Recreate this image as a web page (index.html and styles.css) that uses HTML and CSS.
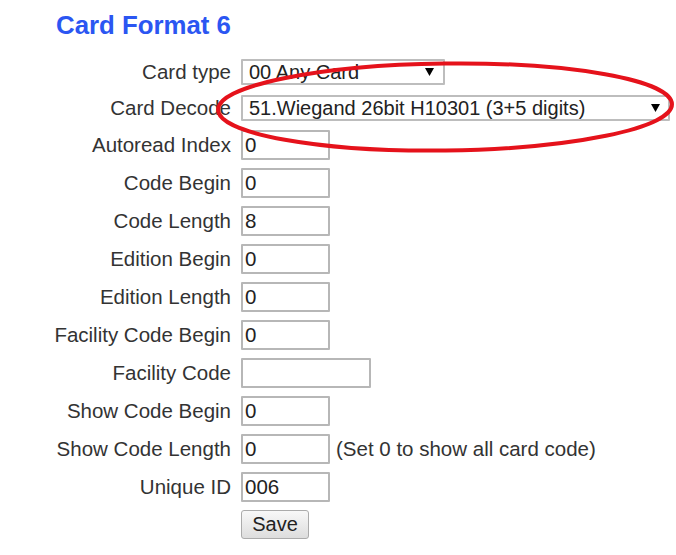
FILE: index.html
```html
<!DOCTYPE html>
<html lang="en">
<head>
<meta charset="UTF-8">
<meta name="viewport" content="width=device-width, initial-scale=1.0">
<title>Card Format 6</title>
<link rel="stylesheet" href="styles.css">
</head>
<body>

<div class="page">
  <h2 class="title">Card Format 6</h2>

  <form class="card-form" onsubmit="return false">
    <label class="field-label" for="cardType">Card type</label>
    <div class="field">
      <div class="select-wrap narrow">
        <select id="cardType">
          <option>00 Any Card</option>
        </select>
        <svg class="arrow" width="9" height="8" viewBox="0 0 9 8"><path d="M0 0H9L4.5 8Z" fill="#000"/></svg>
      </div>
    </div>

    <label class="field-label" for="cardDecode">Card Decode</label>
    <div class="field">
      <div class="select-wrap wide">
        <select id="cardDecode">
          <option>51.Wiegand 26bit H10301 (3+5 digits)</option>
        </select>
        <svg class="arrow" width="9" height="8" viewBox="0 0 9 8"><path d="M0 0H9L4.5 8Z" fill="#000"/></svg>
      </div>
    </div>

    <label class="field-label" for="autoread">Autoread Index</label>
    <div class="field"><input id="autoread" type="text" value="0"></div>

    <label class="field-label" for="codeBegin">Code Begin</label>
    <div class="field"><input id="codeBegin" type="text" value="0"></div>

    <label class="field-label" for="codeLength">Code Length</label>
    <div class="field"><input id="codeLength" type="text" value="8"></div>

    <label class="field-label" for="editionBegin">Edition Begin</label>
    <div class="field"><input id="editionBegin" type="text" value="0"></div>

    <label class="field-label" for="editionLength">Edition Length</label>
    <div class="field"><input id="editionLength" type="text" value="0"></div>

    <label class="field-label" for="facilityBegin">Facility Code Begin</label>
    <div class="field"><input id="facilityBegin" type="text" value="0"></div>

    <label class="field-label" for="facilityCode">Facility Code</label>
    <div class="field"><input id="facilityCode" class="long" type="text" value=""></div>

    <label class="field-label" for="showBegin">Show Code Begin</label>
    <div class="field"><input id="showBegin" type="text" value="0"></div>

    <label class="field-label" for="showLength">Show Code Length</label>
    <div class="field">
      <input id="showLength" type="text" value="0">
      <span class="hint">(Set 0 to show all card code)</span>
    </div>

    <label class="field-label" for="uniqueId">Unique ID</label>
    <div class="field"><input id="uniqueId" type="text" value="006"></div>

    <span></span>
    <div class="field"><button type="submit" class="save-btn">Save</button></div>
  </form>

  <!-- red marker ring drawn over the decode row -->
  <svg class="marker" width="676" height="555" viewBox="0 0 676 555">
    <ellipse cx="445" cy="107" rx="227" ry="43.5" transform="rotate(-0.7 445 107)"
             fill="none" stroke="#e5121b" stroke-width="4"/>
  </svg>
</div>

</body>
</html>
```

FILE: styles.css
```css
body {
  margin: 0;
  background: #fff;
  font-family: 'Liberation Sans', Arial, sans-serif;
  color: #333;
}
.page {
  position: relative;
  width: 676px;
  height: 555px;
  overflow: hidden;
}
.title {
  margin: 10px 0 0 56px;
  font-size: 25.8px;
  line-height: 30px;
  font-weight: bold;
  color: #2b56f2;
}
.card-form {
  margin-top: 18px;
  display: grid;
  grid-template-columns: 231px auto;
  column-gap: 10px;
  row-gap: 8px;
  align-items: center;
}
.field-label {
  text-align: right;
  font-size: 20.5px;
  line-height: 24px;
  color: #333;
  white-space: nowrap;
}
.field {
  display: flex;
  align-items: center;
  gap: 6px;
}
input[type="text"] {
  box-sizing: border-box;
  width: 89px;
  height: 30px;
  margin: 0;
  padding: 0 2px;
  border: 2px solid #b7b7b7;
  border-radius: 1px;
  font-family: inherit;
  font-size: 20.5px;
  color: #222;
  background: #fff;
  outline: none;
}
input.long {
  width: 130px;
}
.hint {
  font-size: 20.5px;
  color: #333;
  white-space: nowrap;
}
.select-wrap {
  position: relative;
  margin: 1px 0;
}
.select-wrap select {
  box-sizing: border-box;
  width: 100%;
  height: 26px;
  margin: 0;
  padding: 0 24px 0 6px;
  border: 2px solid #bdbdbd;
  border-radius: 1px;
  background: #fff;
  font-family: inherit;
  font-size: 20px;
  color: #222;
  appearance: none;
  -webkit-appearance: none;
  outline: none;
}
.select-wrap.narrow {
  width: 204px;
}
.select-wrap.wide {
  width: 429px;
}
.arrow {
  position: absolute;
  right: 11px;
  top: 9px;
  pointer-events: none;
}
.wide .arrow {
  right: 10px;
}
.save-btn {
  box-sizing: border-box;
  width: 68px;
  height: 29px;
  margin: 0;
  padding: 0;
  border: 1px solid #ababab;
  border-radius: 3px;
  background: linear-gradient(to bottom, #f8f8f8, #dddddd);
  font-family: inherit;
  font-size: 20px;
  color: #222;
  cursor: pointer;
}
.marker {
  position: absolute;
  left: 0;
  top: 0;
  pointer-events: none;
}
```
